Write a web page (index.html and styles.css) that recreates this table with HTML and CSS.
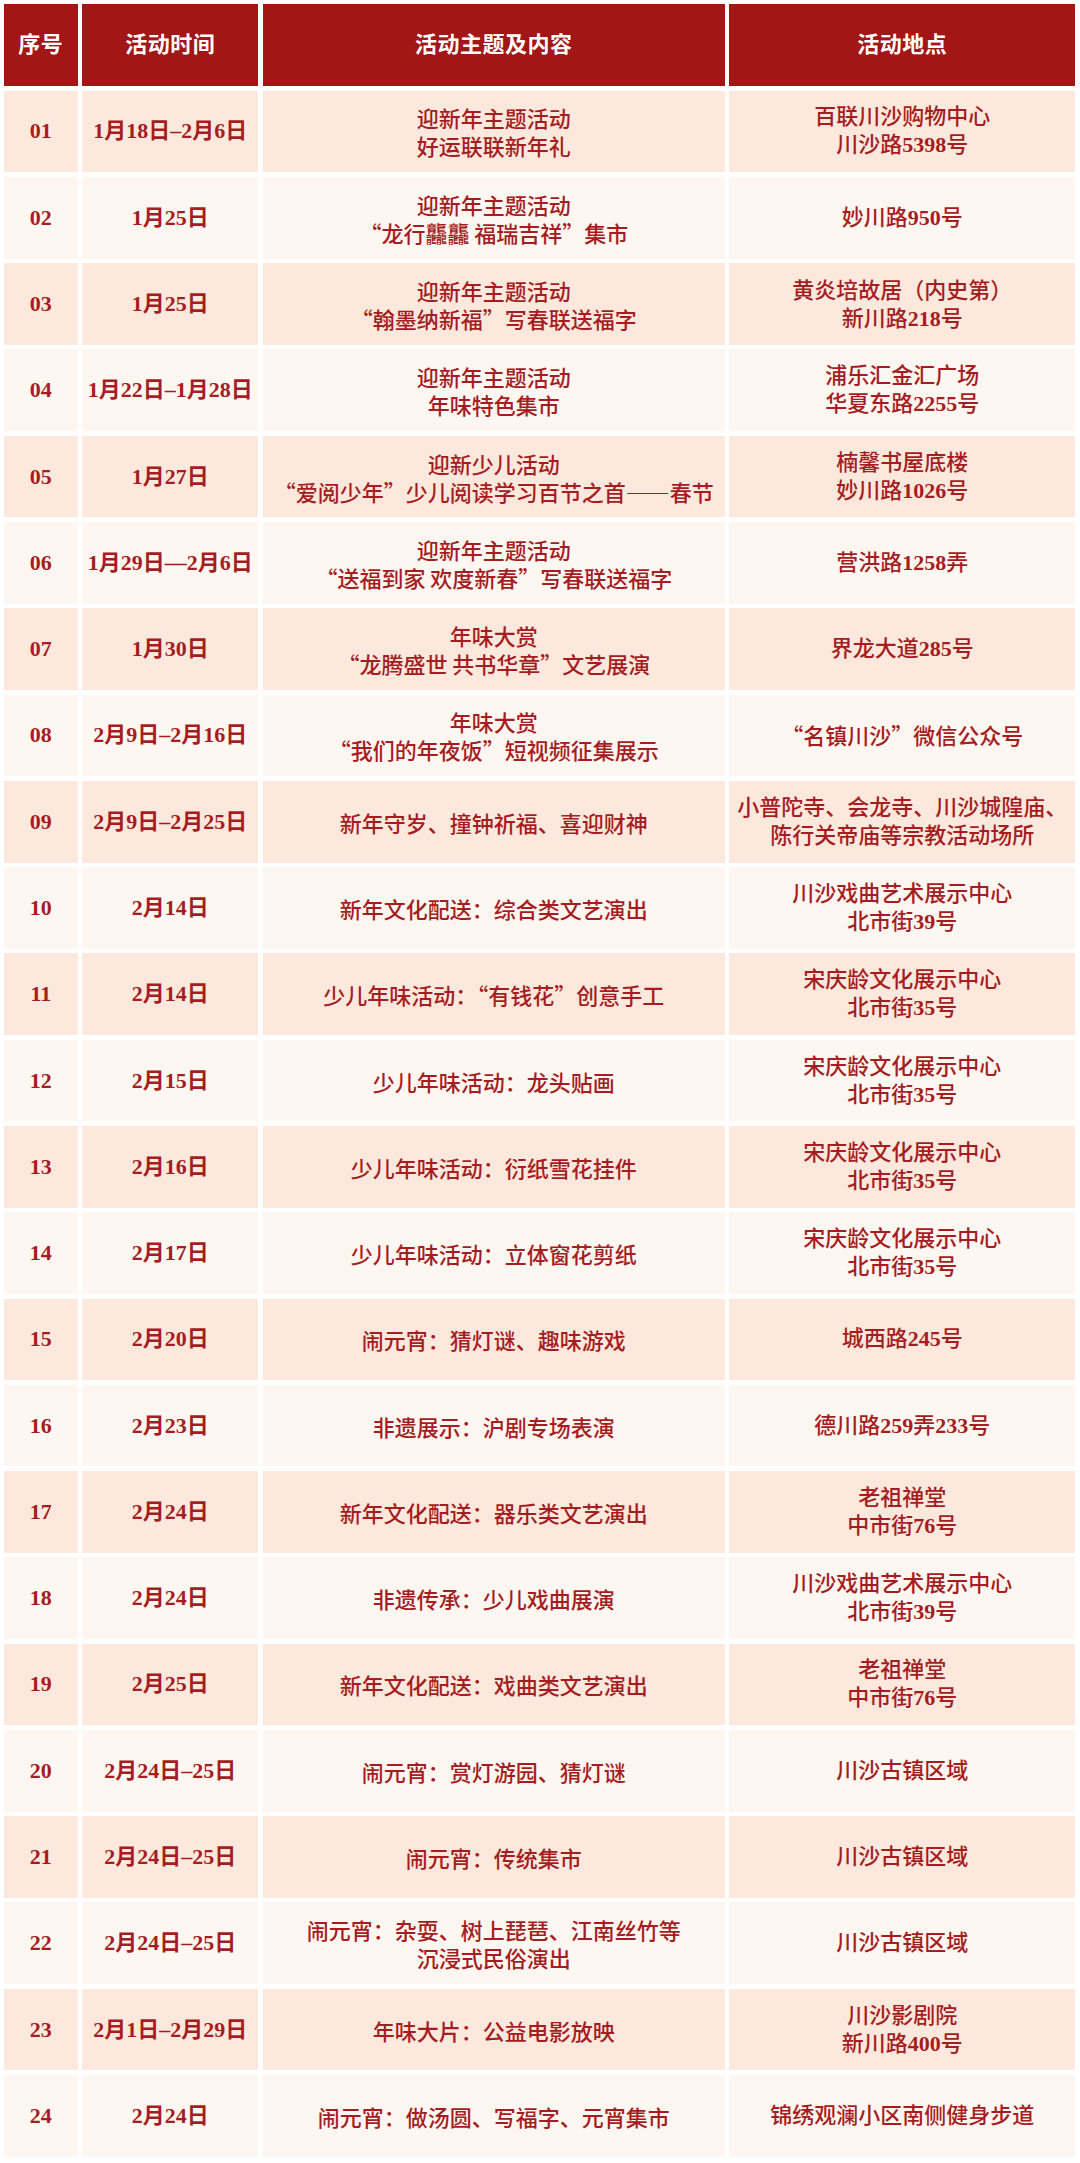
FILE: index.html
```html
<!DOCTYPE html>
<html lang="zh-CN">
<head>
<meta charset="utf-8">
<title>活动安排</title>
<link rel="stylesheet" href="styles.css">
</head>
<body>
<div class="table">
  <div class="cell head"><div>序号</div></div><div class="cell head"><div>活动时间</div></div><div class="cell head"><div>活动主题及内容</div></div><div class="cell head"><div>活动地点</div></div>

  <div class="cell a num"><div>01</div></div><div class="cell a date"><div>1月18日–2月6日</div></div><div class="cell a topic"><div>迎新年主题活动<br>好运联联新年礼</div></div><div class="cell a place"><div>百联川沙购物中心<br>川沙路<b>5398</b>号</div></div>
  <div class="cell b num"><div>02</div></div><div class="cell b date"><div>1月25日</div></div><div class="cell b topic"><div>迎新年主题活动<br>“龙行龘龘 福瑞吉祥”集市</div></div><div class="cell b place"><div>妙川路<b>950</b>号</div></div>
  <div class="cell a num"><div>03</div></div><div class="cell a date"><div>1月25日</div></div><div class="cell a topic"><div>迎新年主题活动<br>“翰墨纳新福”写春联送福字</div></div><div class="cell a place"><div>黄炎培故居<span class="cjk">（内史第）</span><br>新川路<b>218</b>号</div></div>
  <div class="cell b num"><div>04</div></div><div class="cell b date"><div>1月22日–1月28日</div></div><div class="cell b topic"><div>迎新年主题活动<br>年味特色集市</div></div><div class="cell b place"><div>浦乐汇金汇广场<br>华夏东路<b>2255</b>号</div></div>
  <div class="cell a num"><div>05</div></div><div class="cell a date"><div>1月27日</div></div><div class="cell a topic"><div>迎新少儿活动<br>“爱阅少年”少儿阅读学习百节之首——春节</div></div><div class="cell a place"><div>楠馨书屋底楼<br>妙川路<b>1026</b>号</div></div>
  <div class="cell b num"><div>06</div></div><div class="cell b date"><div>1月29日—2月6日</div></div><div class="cell b topic"><div>迎新年主题活动<br>“送福到家 欢度新春”写春联送福字</div></div><div class="cell b place"><div>营洪路<b>1258</b>弄</div></div>
  <div class="cell a num"><div>07</div></div><div class="cell a date"><div>1月30日</div></div><div class="cell a topic"><div>年味大赏<br>“龙腾盛世 共书华章”文艺展演</div></div><div class="cell a place"><div>界龙大道<b>285</b>号</div></div>
  <div class="cell b num"><div>08</div></div><div class="cell b date"><div>2月9日–2月16日</div></div><div class="cell b topic"><div>年味大赏<br>“我们的年夜饭”短视频征集展示</div></div><div class="cell b place"><div><span class="cjk">“名镇川沙”</span>微信公众号</div></div>
  <div class="cell a num"><div>09</div></div><div class="cell a date"><div>2月9日–2月25日</div></div><div class="cell a topic"><div>新年守岁、撞钟祈福、喜迎财神</div></div><div class="cell a place"><div>小普陀寺、会龙寺、川沙城隍庙、<br>陈行关帝庙等宗教活动场所</div></div>
  <div class="cell b num"><div>10</div></div><div class="cell b date"><div>2月14日</div></div><div class="cell b topic"><div>新年文化配送：综合类文艺演出</div></div><div class="cell b place"><div>川沙戏曲艺术展示中心<br>北市街<b>39</b>号</div></div>
  <div class="cell a num"><div>11</div></div><div class="cell a date"><div>2月14日</div></div><div class="cell a topic"><div>少儿年味活动：“有钱花”创意手工</div></div><div class="cell a place"><div>宋庆龄文化展示中心<br>北市街<b>35</b>号</div></div>
  <div class="cell b num"><div>12</div></div><div class="cell b date"><div>2月15日</div></div><div class="cell b topic"><div>少儿年味活动：龙头贴画</div></div><div class="cell b place"><div>宋庆龄文化展示中心<br>北市街<b>35</b>号</div></div>
  <div class="cell a num"><div>13</div></div><div class="cell a date"><div>2月16日</div></div><div class="cell a topic"><div>少儿年味活动：衍纸雪花挂件</div></div><div class="cell a place"><div>宋庆龄文化展示中心<br>北市街<b>35</b>号</div></div>
  <div class="cell b num"><div>14</div></div><div class="cell b date"><div>2月17日</div></div><div class="cell b topic"><div>少儿年味活动：立体窗花剪纸</div></div><div class="cell b place"><div>宋庆龄文化展示中心<br>北市街<b>35</b>号</div></div>
  <div class="cell a num"><div>15</div></div><div class="cell a date"><div>2月20日</div></div><div class="cell a topic"><div>闹元宵：猜灯谜、趣味游戏</div></div><div class="cell a place"><div>城西路<b>245</b>号</div></div>
  <div class="cell b num"><div>16</div></div><div class="cell b date"><div>2月23日</div></div><div class="cell b topic"><div>非遗展示：沪剧专场表演</div></div><div class="cell b place"><div>德川路<b>259</b>弄<b>233</b>号</div></div>
  <div class="cell a num"><div>17</div></div><div class="cell a date"><div>2月24日</div></div><div class="cell a topic"><div>新年文化配送：器乐类文艺演出</div></div><div class="cell a place"><div>老祖禅堂<br>中市街<b>76</b>号</div></div>
  <div class="cell b num"><div>18</div></div><div class="cell b date"><div>2月24日</div></div><div class="cell b topic"><div>非遗传承：少儿戏曲展演</div></div><div class="cell b place"><div>川沙戏曲艺术展示中心<br>北市街<b>39</b>号</div></div>
  <div class="cell a num"><div>19</div></div><div class="cell a date"><div>2月25日</div></div><div class="cell a topic"><div>新年文化配送：戏曲类文艺演出</div></div><div class="cell a place"><div>老祖禅堂<br>中市街<b>76</b>号</div></div>
  <div class="cell b num"><div>20</div></div><div class="cell b date"><div>2月24日–25日</div></div><div class="cell b topic"><div>闹元宵：赏灯游园、猜灯谜</div></div><div class="cell b place"><div>川沙古镇区域</div></div>
  <div class="cell a num"><div>21</div></div><div class="cell a date"><div>2月24日–25日</div></div><div class="cell a topic"><div>闹元宵：传统集市</div></div><div class="cell a place"><div>川沙古镇区域</div></div>
  <div class="cell b num"><div>22</div></div><div class="cell b date"><div>2月24日–25日</div></div><div class="cell b topic"><div>闹元宵：杂耍、树上琵琶、江南丝竹等<br>沉浸式民俗演出</div></div><div class="cell b place"><div>川沙古镇区域</div></div>
  <div class="cell a num"><div>23</div></div><div class="cell a date"><div>2月1日–2月29日</div></div><div class="cell a topic"><div>年味大片：公益电影放映</div></div><div class="cell a place"><div>川沙影剧院<br>新川路<b>400</b>号</div></div>
  <div class="cell b num"><div>24</div></div><div class="cell b date"><div>2月24日</div></div><div class="cell b topic"><div>闹元宵：做汤圆、写福字、元宵集市</div></div><div class="cell b place"><div>锦绣观澜小区南侧健身步道</div></div>
</div>
</body>
</html>
```

FILE: styles.css
```css
html, body {
  margin: 0;
  padding: 0;
  background: #ffffff;
}

.table {
  display: grid;
  grid-template-columns: 73.7px 176px 462px 345.5px;
  grid-auto-rows: 81.7px;
  gap: 4.6px;
  padding: 4.3px 5px 6px 4px;
  font-family: "Liberation Serif", "Noto Sans CJK SC", serif;
  color: #a51d21;
  font-size: 22px;
  line-height: 28px;
}

.cell {
  display: flex;
  align-items: center;
  justify-content: center;
  text-align: center;
  font-weight: 500;
}

.cell b {
  font-weight: 700;
}

.cell.a { background: #fde8dd; }
.cell.b { background: #fef6f1; }

.cell.head {
  background: #a21616;
  color: #ffffff;
  font-weight: 700;
  letter-spacing: 0.5px;
}

.num, .date {
  font-weight: 700;
}

.topic {
  font-family: "Noto Sans CJK SC", "Liberation Serif", sans-serif;
}

.cjk {
  font-family: "Noto Sans CJK SC", sans-serif;
}
```
